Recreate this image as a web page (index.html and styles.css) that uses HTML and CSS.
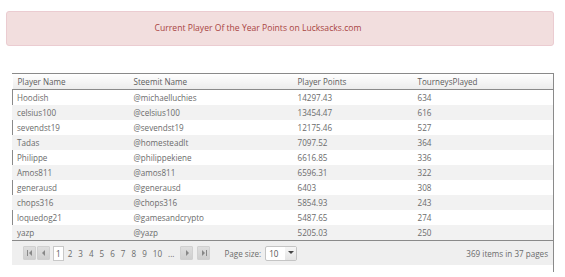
FILE: index.html
```html
<!DOCTYPE html>
<html>
<head>
    <title>Player Of the Year</title>
    <link rel="stylesheet" href="styles.css">
</head>
<body>
    <div class="alert">Current Player Of the Year Points on Lucksacks.com</div>

    <div class="grid">
        <table>
            <thead>
                <tr>
                    <th class="col-name">Player Name</th>
                    <th class="col-steem">Steemit Name</th>
                    <th class="col-points">Player Points</th>
                    <th>TourneysPlayed</th>
                </tr>
            </thead>
            <tbody>
                <tr><td>Hoodish</td><td>@michaelluchies</td><td>14297.43</td><td>634</td></tr>
                <tr class="alt"><td>celsius100</td><td>@celsius100</td><td>13454.47</td><td>616</td></tr>
                <tr><td>sevendst19</td><td>@sevendst19</td><td>12175.46</td><td>527</td></tr>
                <tr class="alt"><td>Tadas</td><td>@homesteadlt</td><td>7097.52</td><td>364</td></tr>
                <tr><td>Philippe</td><td>@philippekiene</td><td>6616.85</td><td>336</td></tr>
                <tr class="alt"><td>Amos811</td><td>@amos811</td><td>6596.31</td><td>322</td></tr>
                <tr><td>generausd</td><td>@generausd</td><td>6403</td><td>308</td></tr>
                <tr class="alt"><td>chops316</td><td>@chops316</td><td>5854.93</td><td>243</td></tr>
                <tr><td>loquedog21</td><td>@gamesandcrypto</td><td>5487.65</td><td>274</td></tr>
                <tr class="alt"><td>yazp</td><td>@yazp</td><td>5205.03</td><td>250</td></tr>
            </tbody>
        </table>

        <div class="pager">
            <div class="pager-nav">
                <span class="pager-btn">
                    <svg width="6" height="6" viewBox="0 0 6 6"><rect x="0" y="0" width="1" height="6" fill="#888"/><path d="M5 0 L2 3 L5 6 Z" fill="#888"/></svg>
                </span>
                <span class="pager-btn">
                    <svg width="6" height="6" viewBox="0 0 6 6"><path d="M4 0 L1 3 L4 6 Z" fill="#888"/></svg>
                </span>
                <span class="page current">1</span>
                <span class="page">2</span>
                <span class="page">3</span>
                <span class="page">4</span>
                <span class="page">5</span>
                <span class="page">6</span>
                <span class="page">7</span>
                <span class="page">8</span>
                <span class="page">9</span>
                <span class="page">10</span>
                <span class="page">...</span>
                <span class="pager-btn next">
                    <svg width="6" height="6" viewBox="0 0 6 6"><path d="M2 0 L5 3 L2 6 Z" fill="#888"/></svg>
                </span>
                <span class="pager-btn last">
                    <svg width="6" height="6" viewBox="0 0 6 6"><path d="M1 0 L4 3 L1 6 Z" fill="#888"/><rect x="5" y="0" width="1" height="6" fill="#888"/></svg>
                </span>
            </div>
            <div class="page-size">
                <span>Page size:</span>
                <span class="select">
                    <span class="select-value">10</span>
                    <span class="select-arrow">
                        <svg width="6" height="4" viewBox="0 0 6 4"><path d="M0 0 L6 0 L3 3 Z" fill="#444"/></svg>
                    </span>
                </span>
            </div>
            <div class="pager-info">369 items in 37 pages</div>
        </div>
    </div>
</body>
</html>
```

FILE: styles.css
```css
body {
    font-family: "Open Sans", Arial, sans-serif;
    font-size: 8.1px;
    color: #6b6b6b;
    margin: 0;
    padding: 11px 11px 0 6px;
    background-color: white;
}

.alert {
    height: 33px;
    line-height: 33px;
    padding-right: 44px;
    text-align: center;
    font-size: 8.6px;
    color: #a94442;
    background-color: #f2dede;
    border: 1px solid #ebccd1;
    border-radius: 3px;
}

.grid {
    margin: 27px 0 0 6px;
    border-top: 1px solid #8a8a8a;
    border-right: 1px solid #8a8a8a;
    height: 198px;
}

table {
    width: 100%;
    border-collapse: collapse;
}

th {
    text-align: left;
    font-weight: normal;
    color: #5c5c5c;
    height: 15px;
    padding: 0 5px;
    background: linear-gradient(#ffffff, #ececec);
    border-bottom: 1px solid #8a8a8a;
}

.col-name {
    width: 106px;
}

.col-steem {
    width: 154px;
}

.col-points {
    width: 110px;
}

td {
    height: 15px;
    padding: 0 5px;
}

tbody tr td:first-child {
    border-left: 1px solid #8a8a8a;
    padding-left: 4px;
}

tbody tr.alt {
    background-color: #f2f2f2;
}

tbody tr.alt td:first-child {
    border-left-color: #f2f2f2;
}

.pager {
    display: flex;
    align-items: center;
    height: 24px;
    padding: 0 5px 0 11px;
    background-color: #efefef;
    border-top: 1px solid #8a8a8a;
}

.pager-nav {
    display: flex;
    align-items: center;
}

.pager-btn {
    display: flex;
    align-items: center;
    justify-content: center;
    width: 11px;
    height: 12px;
    margin-right: 1px;
    background: linear-gradient(#dedede, #cfcfcf);
    border: 1px solid #d0d0d0;
    border-radius: 1px;
}

.pager-btn.next {
    margin-left: 3px;
    margin-right: 4px;
}

.page {
    padding: 0 3px;
    line-height: 13px;
}

.page.current {
    background-color: white;
    border: 1px solid #c8c8c8;
    padding: 0 2px;
    margin-left: 2px;
    margin-right: 1px;
    color: #555;
}

.page-size {
    display: flex;
    align-items: center;
    gap: 4px;
    margin-left: 13px;
}

.select {
    display: flex;
    align-items: center;
    width: 30px;
    height: 13px;
    border: 1px solid #c4c4c4;
    border-radius: 2px;
    background-color: white;
}

.select-value {
    flex: 1;
    padding-left: 3px;
    color: #555;
}

.select-arrow {
    display: flex;
    align-items: center;
    justify-content: center;
    width: 11px;
    height: 13px;
    background: linear-gradient(#f6f6f6, #e4e4e4);
}

.pager-info {
    margin-left: auto;
}
```
